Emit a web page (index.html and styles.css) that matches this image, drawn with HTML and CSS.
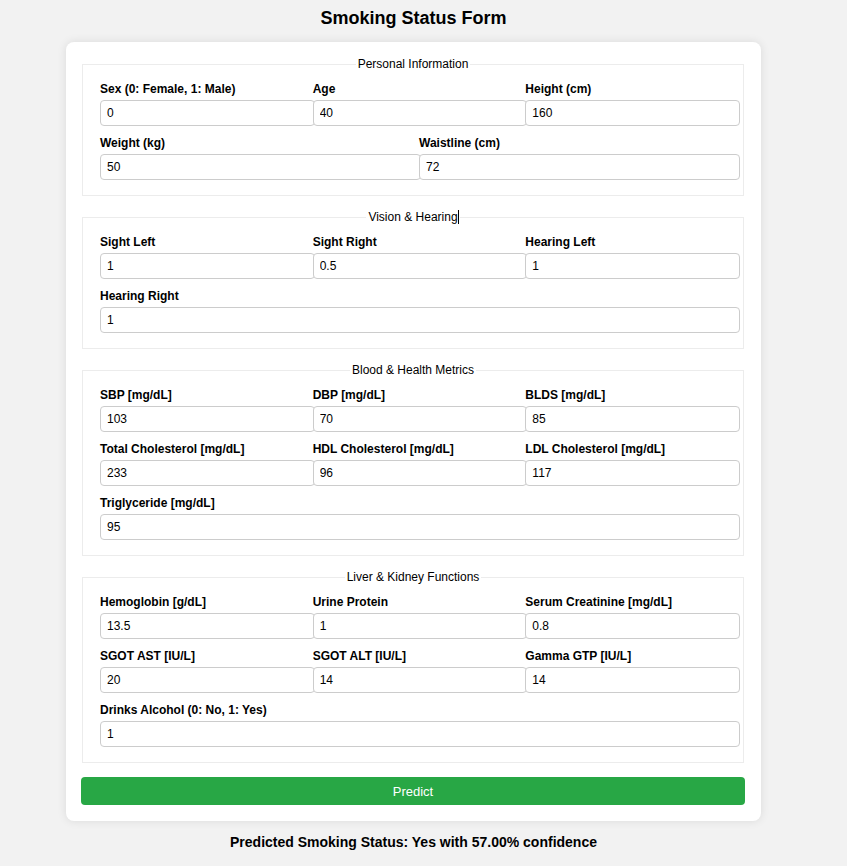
FILE: index.html
```html
<!DOCTYPE html>
<html>
<head>
<meta charset="utf-8">
<title>Smoking Status Form</title>
<link rel="stylesheet" href="styles.css">
</head>
<body>
<h1 class="title">Smoking Status Form</h1>
<form class="card">
  <fieldset class="group">
    <legend class="legend">Personal Information</legend>
    <div class="row">
      <div class="field"><label class="label">Sex (0: Female, 1: Male)</label><input class="input" value="0"></div>
      <div class="field"><label class="label">Age</label><input class="input" value="40"></div>
      <div class="field"><label class="label">Height (cm)</label><input class="input" value="160"></div>
    </div>
    <div class="row">
      <div class="field"><label class="label">Weight (kg)</label><input class="input" value="50"></div>
      <div class="field"><label class="label">Waistline (cm)</label><input class="input" value="72"></div>
    </div>
  </fieldset>
  <fieldset class="group">
    <legend class="legend">Vision &amp; Hearing<span class="caret"></span></legend>
    <div class="row">
      <div class="field"><label class="label">Sight Left</label><input class="input" value="1"></div>
      <div class="field"><label class="label">Sight Right</label><input class="input" value="0.5"></div>
      <div class="field"><label class="label">Hearing Left</label><input class="input" value="1"></div>
    </div>
    <div class="row">
      <div class="field"><label class="label">Hearing Right</label><input class="input" value="1"></div>
    </div>
  </fieldset>
  <fieldset class="group">
    <legend class="legend">Blood &amp; Health Metrics</legend>
    <div class="row">
      <div class="field"><label class="label">SBP [mg/dL]</label><input class="input" value="103"></div>
      <div class="field"><label class="label">DBP [mg/dL]</label><input class="input" value="70"></div>
      <div class="field"><label class="label">BLDS [mg/dL]</label><input class="input" value="85"></div>
    </div>
    <div class="row">
      <div class="field"><label class="label">Total Cholesterol [mg/dL]</label><input class="input" value="233"></div>
      <div class="field"><label class="label">HDL Cholesterol [mg/dL]</label><input class="input" value="96"></div>
      <div class="field"><label class="label">LDL Cholesterol [mg/dL]</label><input class="input" value="117"></div>
    </div>
    <div class="row">
      <div class="field"><label class="label">Triglyceride [mg/dL]</label><input class="input" value="95"></div>
    </div>
  </fieldset>
  <fieldset class="group">
    <legend class="legend">Liver &amp; Kidney Functions</legend>
    <div class="row">
      <div class="field"><label class="label">Hemoglobin [g/dL]</label><input class="input" value="13.5"></div>
      <div class="field"><label class="label">Urine Protein</label><input class="input" value="1"></div>
      <div class="field"><label class="label">Serum Creatinine [mg/dL]</label><input class="input" value="0.8"></div>
    </div>
    <div class="row">
      <div class="field"><label class="label">SGOT AST [IU/L]</label><input class="input" value="20"></div>
      <div class="field"><label class="label">SGOT ALT [IU/L]</label><input class="input" value="14"></div>
      <div class="field"><label class="label">Gamma GTP [IU/L]</label><input class="input" value="14"></div>
    </div>
    <div class="row">
      <div class="field"><label class="label">Drinks Alcohol (0: No, 1: Yes)</label><input class="input" value="1"></div>
    </div>
  </fieldset>
  <button type="button" class="btn">Predict</button>
</form>
<p class="result">Predicted Smoking Status: Yes with 57.00% confidence</p>
</body>
</html>
```
FILE: styles.css
```css
* { box-sizing: border-box; }
html, body { margin: 0; }
body {
  background: #f2f2f2;
  font-family: "Liberation Sans", Arial, sans-serif;
  color: #000;
  padding: 8px 20px 0 0;
}
.title {
  font-size: 18px;
  font-weight: bold;
  line-height: 21px;
  text-align: center;
  margin: 0 0 13px;
}
.card {
  width: 695px;
  margin: 0 auto;
  background: #fff;
  border-radius: 8px;
  box-shadow: 0 0 10px rgba(0, 0, 0, 0.1);
  padding: 15px 17px 16px 16px;
}
.group {
  border: 1px solid #ececec;
  margin: 0 0 14px;
  padding: 11px 17px 15px 17px;
  min-width: 0;
}
.legend {
  font-size: 12px;
  line-height: 14px;
  padding: 0 2px;
  margin: 0 auto;
  position: relative;
}
.caret {
  position: absolute;
  right: 1px;
  top: 0;
  width: 1px;
  height: 14px;
  background: #000;
}
.row {
  display: flex;
  margin-right: -12px;
}
.row + .row { margin-top: 10px; }
.field {
  flex: 1 1 0;
  min-width: 0;
  display: flex;
  flex-direction: column;
}
.label {
  font-size: 12px;
  font-weight: bold;
  line-height: 14px;
  margin-bottom: 4px;
  white-space: nowrap;
}
.input {
  width: calc(100% + 2px);
  height: 26px;
  padding: 5px 6px;
  border: 1px solid #ccc;
  border-radius: 4px;
  font-family: "Liberation Sans", Arial, sans-serif;
  font-size: 12px;
  color: #000;
  background: #fff;
}
.btn {
  display: block;
  width: calc(100% + 2px);
  margin: 4px -1px 0;
  height: 28px;
  border: none;
  border-radius: 4px;
  background: #28a745;
  color: #fff;
  font-family: "Liberation Sans", Arial, sans-serif;
  font-size: 13px;
}
.result {
  margin: 13px 0 0;
  text-align: center;
  font-size: 14px;
  font-weight: bold;
  line-height: 16px;
}
```
